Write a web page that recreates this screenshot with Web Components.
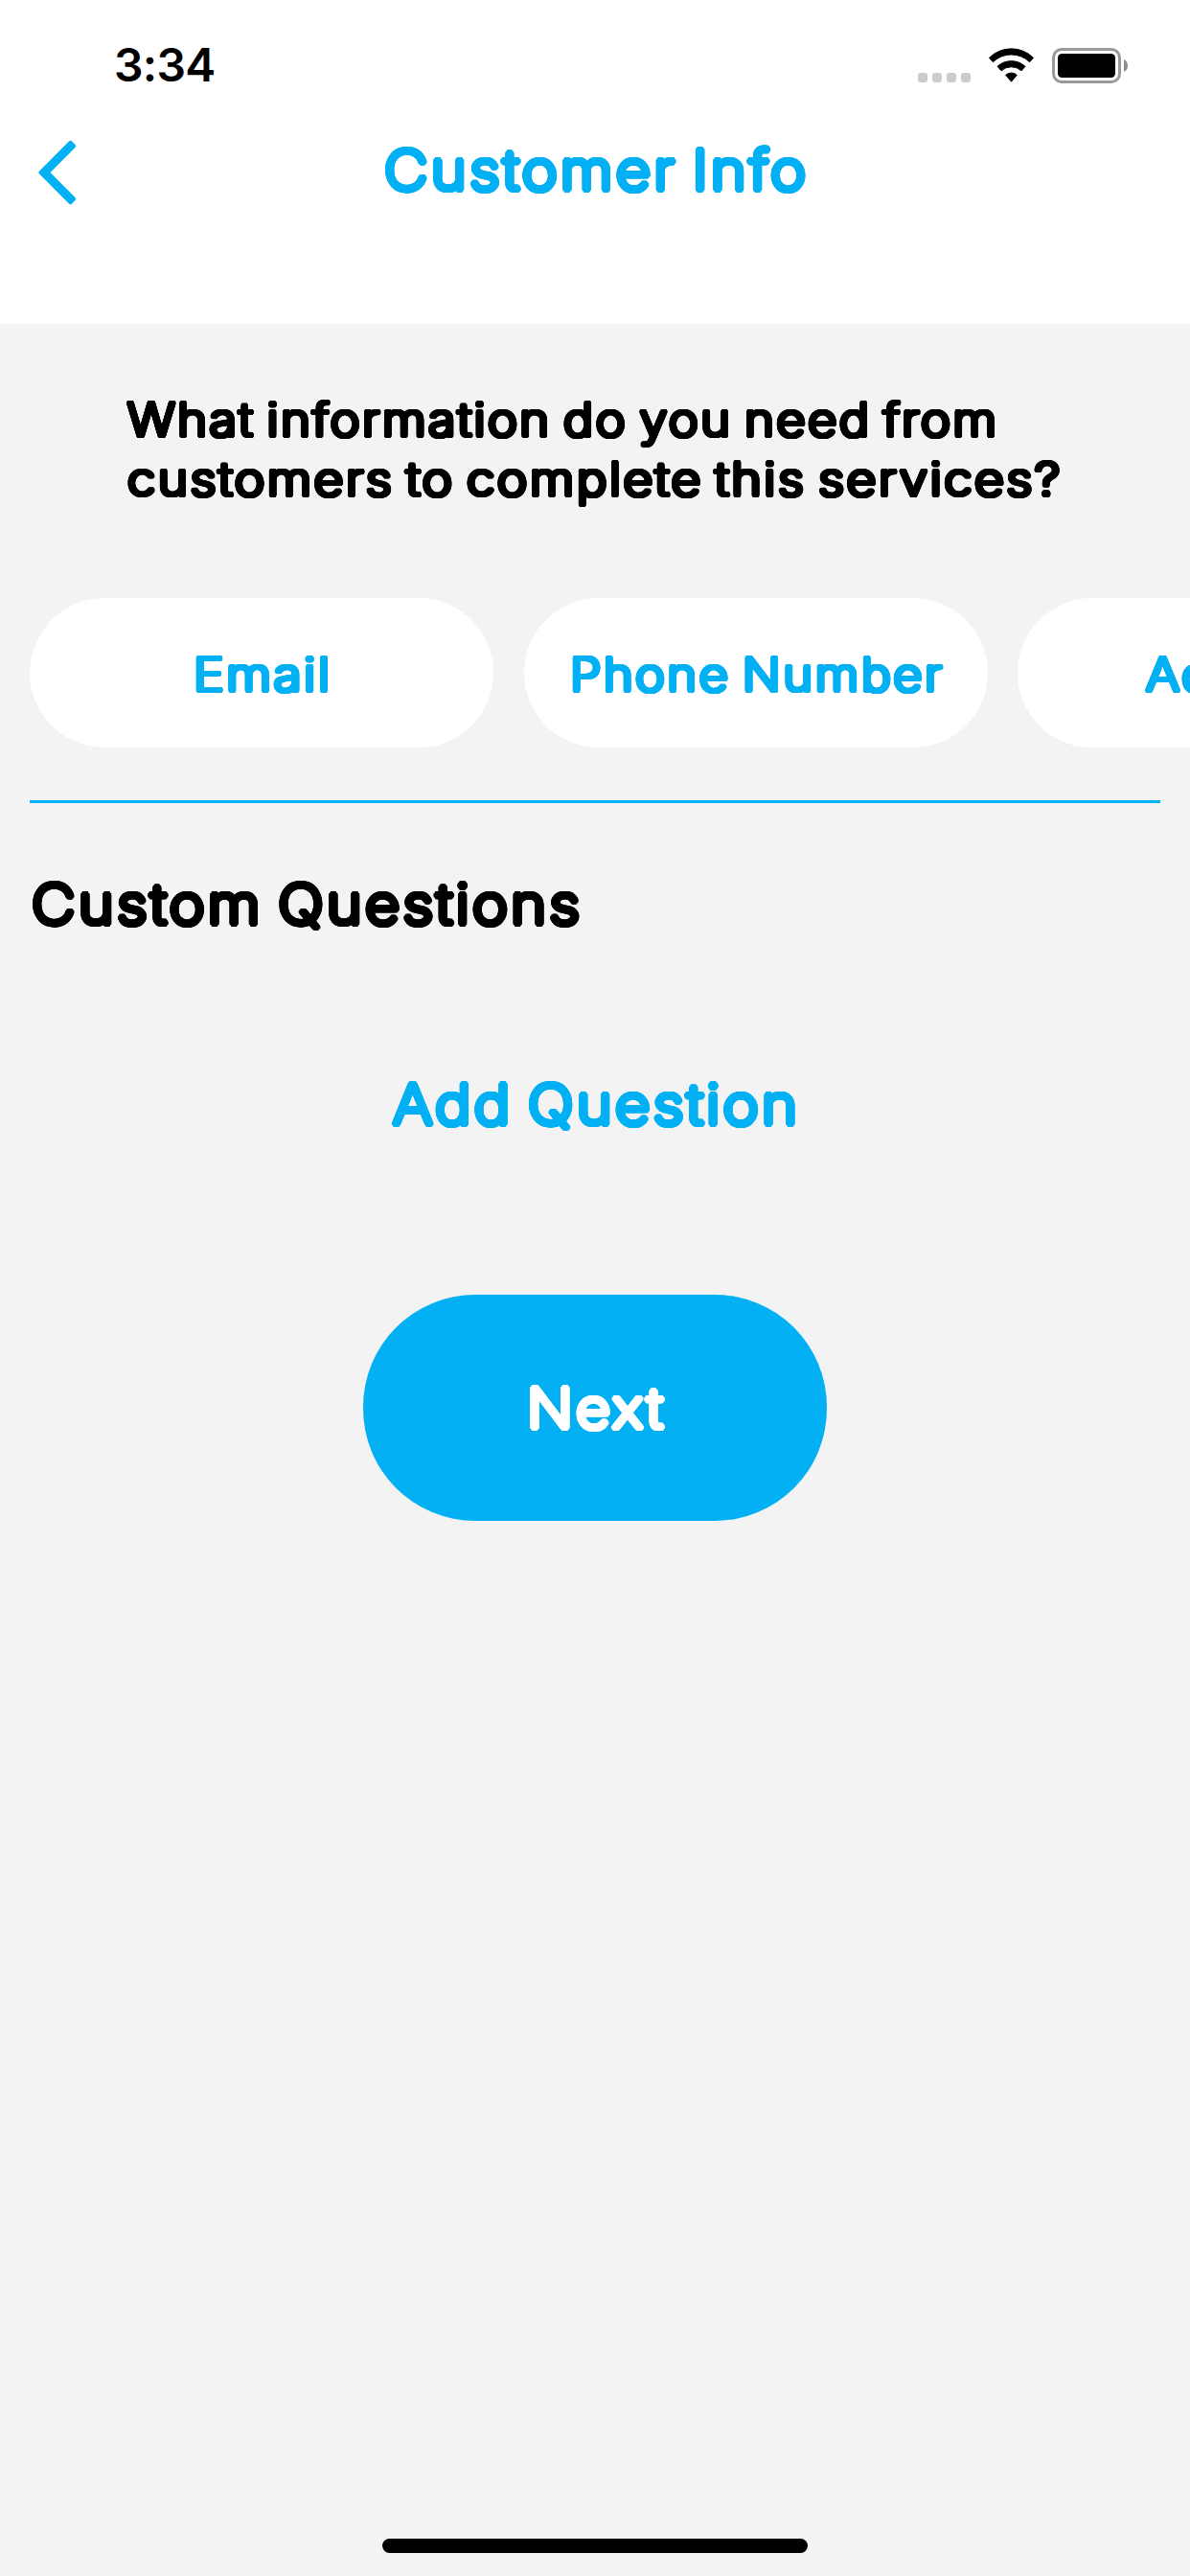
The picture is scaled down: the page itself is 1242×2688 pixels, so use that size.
<!DOCTYPE html>
<html lang="en">
<head>
<meta charset="utf-8">
<title>Customer Info</title>
<style>
  html, body { margin: 0; background: #f3f3f3; }
  body { width: 1242px; height: 2688px; overflow: hidden; }
</style>
</head>
<body>
<customer-info-screen></customer-info-screen>
<script>
const define = (name, html, setup) => customElements.define(name, class extends HTMLElement {
  connectedCallback() {
    if (this.shadowRoot) return;
    this.attachShadow({ mode: 'open' }).innerHTML = html;
    if (setup) setup(this, this.shadowRoot);
  }
});

/* Rings of hard shadows thicken a light face into round-ended strokes. */
const ring = (r, n) => Array.from({ length: n }, (_, i) => {
  const a = i * 2 * Math.PI / n;
  return `${(r * Math.cos(a)).toFixed(2)}px ${(r * Math.sin(a)).toFixed(2)}px 0 currentColor`;
}).join(',');
const thicken = r => ring(r, 24) + ',' + ring(r / 2, 12);

/* Heavy rounded lettering; "fit" is the width in px that the line is widened to. */
define('round-text', `
  <style>
    :host { display: block; font: 200 57px/76px Inter, sans-serif; white-space: nowrap; letter-spacing: 3px;
            word-spacing: -5px; text-shadow: ${thicken(2.9)}; }
    :host([small]) { font-size: 47.3px; line-height: 62px; letter-spacing: 2.4px; word-spacing: -4.5px; text-shadow: ${thicken(2.4)}; }
    span { display: inline-block; transform-origin: 0 50%; }
  </style>
  <span><slot></slot></span>`, (host, root) => {
    const fit = Number(host.getAttribute('fit'));
    const span = root.querySelector('span');
    const spacing = parseFloat(getComputedStyle(span).letterSpacing);
    const scale = fit / (span.getBoundingClientRect().width - spacing);
    host.style.width = fit + 'px';
    span.style.transform = `scaleX(${scale})`;
  });

define('status-bar', `
  <style>
    :host { display: flex; justify-content: space-between; align-items: center; height: 135px;
            padding: 0 64px 0 119px; box-sizing: border-box; color: #000; }
    time { font: 600 48px/58px Inter, sans-serif; letter-spacing: -0.7px; }
    svg { display: block; width: 220px; height: 38px; }
  </style>
  <time>3:34</time>
  <svg viewBox="84 54 660 114">
    <g fill="#ccc"><rect x="84" y="135" width="30" height="30" rx="9"/><rect x="129" y="135" width="30" height="30" rx="9"/><rect x="174" y="135" width="30" height="30" rx="9"/><rect x="219" y="135" width="30" height="30" rx="9"/></g>
    <g stroke="#000" stroke-width="3" stroke-linejoin="round">
      <path d="M307.500 88A98 98 0 0 1 445.500 88L434 101A83 83 0 0 0 319 101Z"/>
      <path d="M333 115A64 64 0 0 1 420 115L408 128.500A47 47 0 0 0 345 128.500Z"/>
      <path d="M359 142A26 26 0 0 1 394 142L376.500 162.500Z"/>
    </g>
    <rect x="508.500" y="61.500" width="207" height="102" rx="26" fill="none" stroke="#999" stroke-width="9"/>
    <rect x="522" y="75" width="180" height="75" rx="13"/>
    <path d="M729 93Q741 99 741 112.500Q741 126 729 132Z" fill="#8c8c8c"/>
  </svg>`);

define('nav-bar', `
  <style>
    :host { display: grid; grid-template-columns: 100px 1fr 100px; align-items: start; height: 203px;
            box-sizing: border-box; padding-top: 5px; color: #03b0f4; }
    svg { display: block; width: 42px; height: 70px; margin: 5px 0 0 39px; }
    .title { justify-self: center; }
  </style>
  <svg viewBox="39 145 42 70"><path d="M42.200 180L73.500 148.700L77.300 152.500L49.900 180L77.300 207.500L73.500 211.300Z" fill="currentColor" stroke="currentColor" stroke-width="3.800" stroke-linejoin="round"/></svg>
  <div class="title"><slot></slot></div>`);

define('pill-button', `
  <style>
    :host { display: flex; flex: none; align-items: center; justify-content: center; box-sizing: border-box;
            width: 484px; height: 156px; border-radius: 78px; padding-top: 4px; background: #fff; color: #03b0f4; }
    :host([primary]) { height: 236px; border-radius: 117px; padding-top: 2px; background: #03b0f4; color: #fff; }
  </style>
  <slot></slot>`);

define('pill-row', `
  <style>:host { display: flex; gap: 31.500px; padding-left: 31px; overflow: hidden; }</style>
  <slot></slot>`);

define('home-indicator', `
  <style>:host { display: block; width: 444px; height: 15px; border-radius: 7.500px; background: #000; }</style>`);

define('customer-info-screen', `
  <style>
    :host { display: flex; flex-direction: column; width: 1242px; height: 2688px; background: #f3f3f3; overflow: hidden; }
    header { background: #fff; }
    .prompt { padding: 69px 0 0 133px; }
    pill-row { margin-top: 93px; }
    hr { width: 1180px; height: 3px; margin: 55px 31px 0; border: 0; background: #03b0f4; }
    .heading { padding: 68px 0 0 33px; }
    .add { align-self: center; margin-top: 133px; color: #03b0f4; }
    .next { align-self: center; margin-top: 160px; }
    home-indicator { align-self: center; margin: auto 0 24px; }
  </style>
  <header>
    <status-bar></status-bar>
    <nav-bar><round-text fit="440">Customer Info</round-text></nav-bar>
  </header>
  <div class="prompt">
    <round-text small fit="907">What information do you need from</round-text>
    <round-text small fit="973">customers to complete this services?</round-text>
  </div>
  <pill-row>
    <pill-button><round-text small fit="142">Email</round-text></pill-button>
    <pill-button><round-text small fit="388">Phone Number</round-text></pill-button>
    <pill-button><round-text small fit="216">Address</round-text></pill-button>
  </pill-row>
  <hr>
  <div class="heading"><round-text fit="572">Custom Questions</round-text></div>
  <round-text class="add" fit="422">Add Question</round-text>
  <pill-button class="next" primary><round-text fit="142">Next</round-text></pill-button>
  <home-indicator></home-indicator>`);
</script>
</body>
</html>
